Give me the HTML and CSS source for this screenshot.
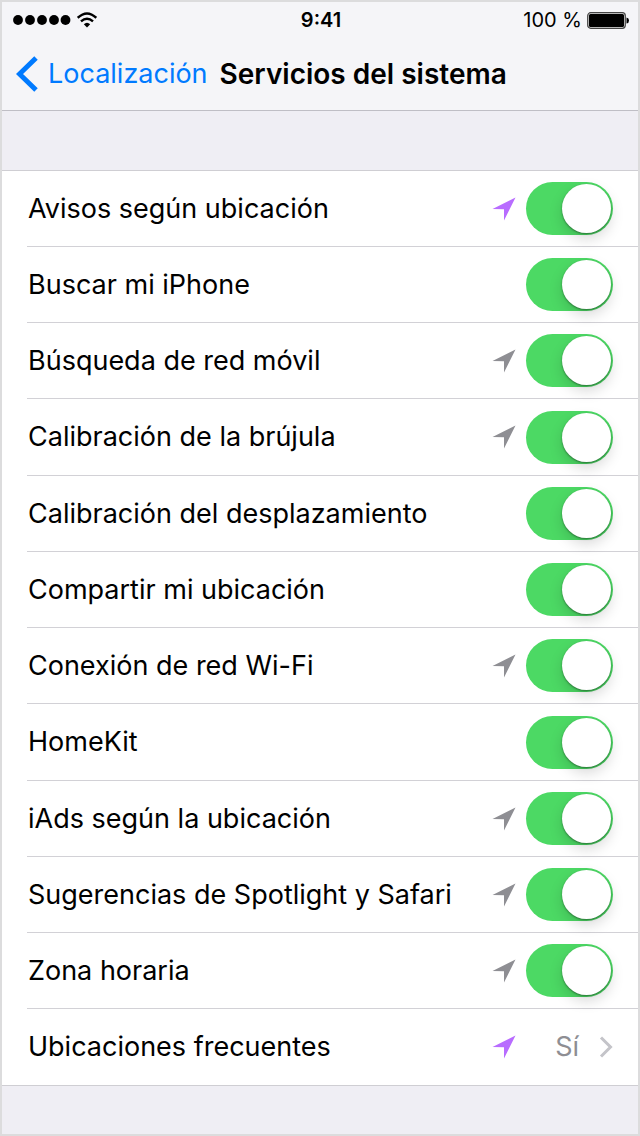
FILE: index.html
```html
<!DOCTYPE html>
<html lang="es">
<head>
<meta charset="utf-8">
<meta name="viewport" content="width=device-width, initial-scale=1">
<title>Servicios del sistema</title>
<link rel="stylesheet" href="styles.css">
</head>
<body>
<svg class="symbols" aria-hidden="true">
  <symbol id="arrow" viewBox="0 0 24 24"><path d="M23.500 0.500 L12 23.500 V12.300 L0.500 12 Z"/></symbol>
</svg>
<div class="screen">
  <header class="top">
    <div class="status">
      <div class="signal">
        <svg class="dots" viewBox="0 0 58 10" aria-hidden="true"><circle cx="5" cy="5" r="4.900"/><circle cx="17" cy="5" r="4.900"/><circle cx="29" cy="5" r="4.900"/><circle cx="41" cy="5" r="4.900"/><circle cx="52.500" cy="5" r="4.900"/></svg>
        <svg class="wifi" viewBox="0 0 20 16" aria-hidden="true"><path d="M0.700 5.800 Q10 -3 19.300 5.800" fill="none" stroke="#000" stroke-width="2.400"/><path d="M4 9.400 Q10 4 16 9.400" fill="none" stroke="#000" stroke-width="2.400"/><path d="M6.800 12.200 Q10 9.200 13.200 12.200 L10 15.500 Z"/></svg>
      </div>
      <time class="clock">9:41</time>
      <div class="power">
        <span>100 %</span>
        <svg class="battery" viewBox="0 0 42 17" aria-hidden="true"><rect x="0.700" y="0.700" width="37.600" height="15.600" rx="3" fill="#ddd" stroke="#444" stroke-width="1.200"/><rect x="2" y="2" width="35" height="13" rx="1.500"/><path d="M39.500 5.500 Q42 6 42 8.500 Q42 11 39.500 11.500 Z"/></svg>
      </div>
    </div>
    <nav class="nav">
      <a class="back" href="#"><svg class="back-icon" viewBox="0 0 22 36" aria-hidden="true"><path d="M20 2 L3.500 18 L20 34" fill="none" stroke="#007aff" stroke-width="5"/></svg>Localización</a>
      <h1 class="title">Servicios del sistema</h1>
    </nav>
  </header>
  <main>
    <ul class="list">
      <li class="row"><label class="label" for="s1">Avisos según ubicación</label><svg class="arrow recent"><use href="#arrow"/></svg><input class="switch" id="s1" type="checkbox" role="switch" checked></li>
      <li class="row"><label class="label" for="s2">Buscar mi iPhone</label><input class="switch" id="s2" type="checkbox" role="switch" checked></li>
      <li class="row"><label class="label" for="s3">Búsqueda de red móvil</label><svg class="arrow"><use href="#arrow"/></svg><input class="switch" id="s3" type="checkbox" role="switch" checked></li>
      <li class="row"><label class="label" for="s4">Calibración de la brújula</label><svg class="arrow"><use href="#arrow"/></svg><input class="switch" id="s4" type="checkbox" role="switch" checked></li>
      <li class="row"><label class="label" for="s5">Calibración del desplazamiento</label><input class="switch" id="s5" type="checkbox" role="switch" checked></li>
      <li class="row"><label class="label" for="s6">Compartir mi ubicación</label><input class="switch" id="s6" type="checkbox" role="switch" checked></li>
      <li class="row"><label class="label" for="s7">Conexión de red Wi-Fi</label><svg class="arrow"><use href="#arrow"/></svg><input class="switch" id="s7" type="checkbox" role="switch" checked></li>
      <li class="row"><label class="label" for="s8">HomeKit</label><input class="switch" id="s8" type="checkbox" role="switch" checked></li>
      <li class="row"><label class="label" for="s9">iAds según la ubicación</label><svg class="arrow"><use href="#arrow"/></svg><input class="switch" id="s9" type="checkbox" role="switch" checked></li>
      <li class="row"><label class="label" for="s10">Sugerencias de Spotlight y Safari</label><svg class="arrow"><use href="#arrow"/></svg><input class="switch" id="s10" type="checkbox" role="switch" checked></li>
      <li class="row"><label class="label" for="s11">Zona horaria</label><svg class="arrow"><use href="#arrow"/></svg><input class="switch" id="s11" type="checkbox" role="switch" checked></li>
      <li class="row"><a class="link" href="#"><span class="label">Ubicaciones frecuentes</span><svg class="arrow recent"><use href="#arrow"/></svg><span class="detail">Sí<svg class="chevron" viewBox="0 0 14 22" aria-hidden="true"><path d="M2 1.500 L11.500 11 L2 20.500" fill="none" stroke="#c4c4c9" stroke-width="3"/></svg></span></a></li>
    </ul>
  </main>
</div>
</body>
</html>
```
FILE: styles.css
```css
* { box-sizing: border-box; }

body {
  margin: 0;
  background: #efeef4;
  color: #000;
  font-family: Inter, "Liberation Sans", sans-serif;
  font-size: 27px;
  line-height: 36px;
}

a { color: inherit; text-decoration: none; }
svg { display: block; flex: none; }
.symbols { position: absolute; width: 0; height: 0; }

.screen {
  min-height: 100vh;
  border: 2px solid #dcdcdd;
}

.top {
  background: #f5f5f8;
  border-bottom: 1px solid #bfbec5;
}

.status {
  display: grid;
  grid-template-columns: 1fr auto 1fr;
  align-items: center;
  height: 34px;
  padding: 0 9px 0 11px;
  font-size: 20px;
}

.signal { display: flex; align-items: center; gap: 6px; }
.dots { width: 58px; height: 10px; }
.wifi { width: 20px; height: 16px; }
.clock { font-weight: 600; }
.power { display: flex; align-items: center; justify-content: flex-end; gap: 5px; }
.battery { width: 42px; height: 17px; }

.nav {
  display: flex;
  align-items: center;
  gap: 12px;
  padding: 20px 14px 18px;
}

.back { display: flex; align-items: center; gap: 10px; color: #007aff; }
.back-icon { width: 22px; height: 36px; }
.title { margin: 0; font-size: 28px; font-weight: 600; white-space: nowrap; }

.list {
  margin: 59px 0 0;
  padding: 0;
  list-style: none;
  background: #fff;
  border-top: 1px solid #cfced3;
  border-bottom: 1px solid #cfced3;
}

.row {
  display: flex;
  align-items: center;
  height: 76px;
  margin-left: 25px;
  padding: 0 25px 0 1px;
  border-bottom: 1px solid #d2d1d6;
}

.row:nth-child(4n) { height: 77px; }
.row:last-child { height: 76px; border-bottom: 0; }

.label { flex: 1; white-space: nowrap; }
.arrow { width: 24px; height: 24px; margin-right: 10px; fill: #8e8e93; }
.recent { fill: #b86cff; }

.switch {
  appearance: none;
  flex: none;
  width: 87px;
  height: 53px;
  margin: 0;
  padding: 2px;
  border-radius: 27px;
  background: #ccc;
}

.switch::before {
  content: "";
  display: block;
  width: 49px;
  height: 49px;
  border-radius: 50%;
  background: #fff;
  box-shadow: 0 1px 2px rgba(0, 0, 0, 0.4), 0 6px 14px rgba(0, 0, 0, 0.15);
}

.switch:checked { background: #4cd964; }
.switch:checked::before { margin-left: auto; }

.link { display: flex; flex: 1; align-items: center; }

.detail {
  display: flex;
  align-items: center;
  justify-content: flex-end;
  gap: 20px;
  width: 87px;
  color: #8e8e93;
}

.chevron { width: 14px; height: 22px; }
```
